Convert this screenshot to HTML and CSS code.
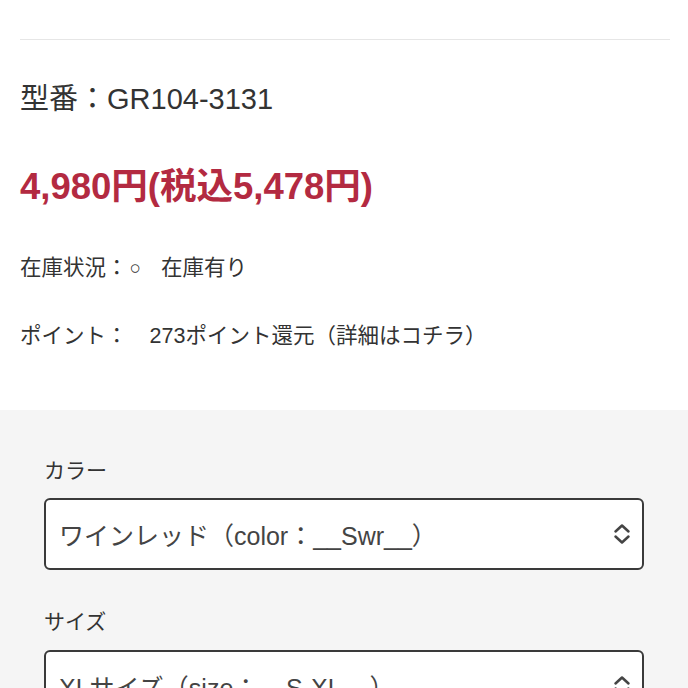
FILE: index.html
```html
<!DOCTYPE html>
<html lang="ja">
  <head>
    <meta charset="UTF-8" />
    <meta name="viewport" content="width=device-width, initial-scale=1.0" />
    <title>商品詳細</title>
    <link rel="stylesheet" href="styles.css">
  </head>

  <body>
    <div class="info">
      <div class="rule"></div>
      <p class="model">型番：GR104-3131</p>
      <p class="price">4,980円(税込5,478円)</p>
      <p class="row">在庫状況：<span class="mark">○</span><span class="val-stock">在庫有り</span></p>
      <p class="row">ポイント：<span class="val-point">273ポイント還元（詳細はコチラ）</span></p>
    </div>

    <div class="options">
      <p class="label">カラー</p>
      <div class="select">
        <span class="select-text">ワインレッド（color：__Swr__）</span>
        <svg class="arrows" width="18" height="22" viewBox="0 0 18 22">
          <path d="M2.5 8.5 L9 2.5 L15.5 8.5" />
          <path d="M2.5 13.5 L9 19.5 L15.5 13.5" />
        </svg>
      </div>

      <p class="label label-size">サイズ</p>
      <div class="select">
        <span class="select-text">XLサイズ（size：__S-XL__）</span>
        <svg class="arrows" width="18" height="22" viewBox="0 0 18 22">
          <path d="M2.5 8.5 L9 2.5 L15.5 8.5" />
          <path d="M2.5 13.5 L9 19.5 L15.5 13.5" />
        </svg>
      </div>
    </div>
  </body>
</html>
```

FILE: styles.css
```css
body {
  margin: 0;
  font-family: "Liberation Sans", "Noto Sans CJK JP", sans-serif;
  color: #333;
  background: #fff;
}

p {
  margin: 0;
}

.info {
  padding: 0 18px 60px 20px;
}

.rule {
  height: 39px;
  border-bottom: 1px solid #e6e6e6;
}

.model {
  margin-top: 42px;
  font-size: 29px;
  line-height: 34px;
}

.price {
  margin-top: 50px;
  font-size: 36.5px;
  line-height: 42px;
  font-weight: bold;
  color: #b32a41;
}

.row {
  margin-top: 46px;
  font-size: 21.5px;
  line-height: 28px;
}

.row + .row {
  margin-top: 40px;
}

.mark {
  display: inline-block;
  margin-left: 2px;
  font-size: 19px;
  vertical-align: 1px;
}

.val-stock {
  margin-left: 20px;
}

.val-point {
  margin-left: 22px;
}

.options {
  background: #f5f5f5;
  padding: 47px 44px 40px;
}

.label {
  font-size: 21px;
  line-height: 28px;
}

.label-size {
  margin-top: 38px;
}

.select {
  margin-top: 13px;
  height: 72px;
  box-sizing: border-box;
  border: 2px solid #3a3a3a;
  border-radius: 6px;
  background: #fff;
  display: flex;
  align-items: center;
  justify-content: space-between;
  padding: 0 11px 0 13px;
}

.label-size + .select {
  margin-top: 14px;
}

.select-text {
  font-size: 25px;
  color: #444;
}

.arrows {
  fill: none;
  stroke: #444;
  stroke-width: 2.5;
  stroke-linecap: round;
  stroke-linejoin: round;
}
```
